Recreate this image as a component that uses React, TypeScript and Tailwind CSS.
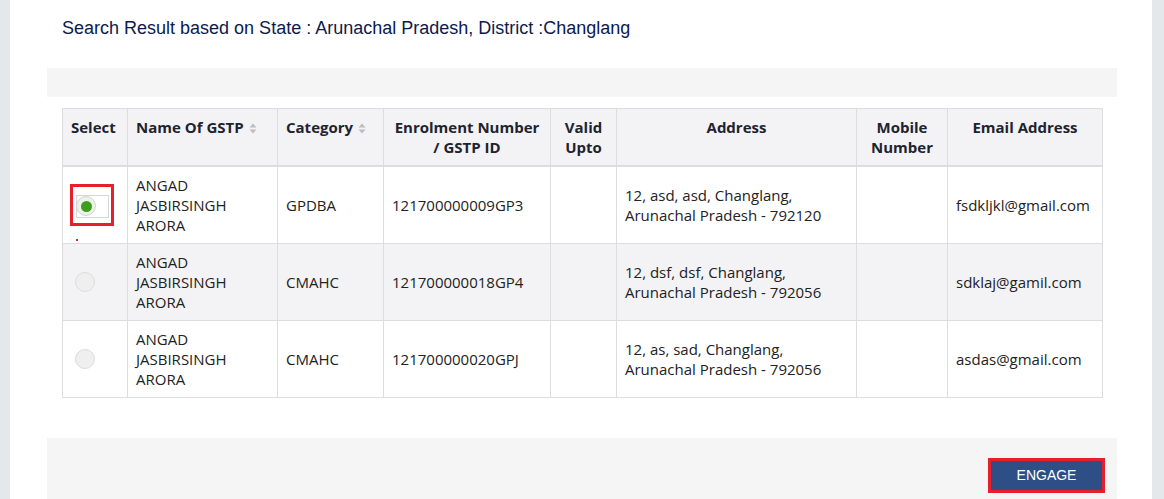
import type { ReactNode } from 'react'

type Row = {
  name: string[]
  category: string
  enrolment: string
  address: string[]
  email: string
  selected?: boolean
}

const ROWS: Row[] = [
  {
    name: ['ANGAD', 'JASBIRSINGH', 'ARORA'],
    category: 'GPDBA',
    enrolment: '121700000009GP3',
    address: ['12, asd, asd, Changlang,', 'Arunachal Pradesh - 792120'],
    email: 'fsdkljkl@gmail.com',
    selected: true,
  },
  {
    name: ['ANGAD', 'JASBIRSINGH', 'ARORA'],
    category: 'CMAHC',
    enrolment: '121700000018GP4',
    address: ['12, dsf, dsf, Changlang,', 'Arunachal Pradesh - 792056'],
    email: 'sdklaj@gamil.com',
  },
  {
    name: ['ANGAD', 'JASBIRSINGH', 'ARORA'],
    category: 'CMAHC',
    enrolment: '121700000020GPJ',
    address: ['12, as, sad, Changlang,', 'Arunachal Pradesh - 792056'],
    email: 'asdas@gmail.com',
  },
]

function SortIcon() {
  return (
    <svg width="8" height="11" viewBox="0 0 8 11" className="ml-[5px] inline-block align-[-1px]">
      <path d="M4 0.5 L7.5 4.5 H0.5 Z" fill="#bdbdbd" />
      <path d="M4 10.5 L7.5 6.5 H0.5 Z" fill="#bdbdbd" />
    </svg>
  )
}

function Th({ children, className = '' }: { children: ReactNode; className?: string }) {
  return (
    <th className={`border border-[#dddddd] border-b-2 px-2 py-2 align-top font-bold text-[#1f2330] ${className}`}>
      {children}
    </th>
  )
}

function Td({ children, className = '' }: { children?: ReactNode; className?: string }) {
  return <td className={`border border-[#dddddd] px-2 py-2 align-middle ${className}`}>{children}</td>
}

function Radio({ checked }: { checked?: boolean }) {
  if (checked) {
    return (
      <div className="relative ml-[-1px] h-[42px] w-[44px] border-[3px] border-[#e5202b]">
        <div className="absolute left-[3px] top-[8px] h-[23px] w-[33px] border border-[#d6d6d6]" />
        <div className="absolute left-[3px] top-[9px] flex h-[20px] w-[20px] items-center justify-center rounded-full border border-[#cfd8cb] bg-[#eef2ec]">
          <div className="h-[11px] w-[11px] rounded-full bg-[#3f9f1b]" />
        </div>
        <div className="absolute left-[3px] top-[52px] h-[2px] w-[2px] bg-[#e5202b]" />
      </div>
    )
  }
  return <div className="ml-[4px] h-[20px] w-[20px] rounded-full border border-[#dcdcdc] bg-[#efefef]" />
}

export default function App() {
  return (
    <div className="flex h-[499px] w-full overflow-hidden bg-[#e5e8eb] pl-[10px] pr-[12px]">
      <div className="flex-1 bg-white">
        {/* Heading */}
        <h2 className="pl-[52px] pt-[17px] font-['Liberation_Sans',Arial,sans-serif] text-[18px] leading-[22px] text-[#0d1a4d]">
          Search Result based on State : Arunachal Pradesh, District :Changlang
        </h2>

        <div className="ml-[37px] mt-[29px] w-[1070px]">
          <div className="h-[29px] bg-[#f5f5f5]" />

          {/* Results table */}
          <div className="px-[15px] pt-[11px]">
            <table className="w-[1040px] table-fixed border-collapse font-['Open_Sans',sans-serif] text-[15px] leading-[20px] text-[#222222]">
              <colgroup>
                <col className="w-[65px]" />
                <col className="w-[150px]" />
                <col className="w-[106px]" />
                <col className="w-[167px]" />
                <col className="w-[66px]" />
                <col className="w-[240px]" />
                <col className="w-[91px]" />
                <col className="w-[155px]" />
              </colgroup>
              <thead className="bg-[#f3f3f5]">
                <tr>
                  <Th className="text-left">Select</Th>
                  <Th className="text-left">
                    Name Of GSTP
                    <SortIcon />
                  </Th>
                  <Th className="text-left">
                    Category
                    <SortIcon />
                  </Th>
                  <Th className="text-center">Enrolment Number / GSTP ID</Th>
                  <Th className="text-center">Valid Upto</Th>
                  <Th className="text-center">Address</Th>
                  <Th className="text-center">Mobile Number</Th>
                  <Th className="text-center">Email Address</Th>
                </tr>
              </thead>
              <tbody>
                {ROWS.map((row, i) => (
                  <tr key={row.enrolment} className={i === 1 ? 'bg-[#f3f3f5]' : 'bg-white'}>
                    <Td>
                      <Radio checked={row.selected} />
                    </Td>
                    <Td>
                      {row.name.map((n) => (
                        <div key={n}>{n}</div>
                      ))}
                    </Td>
                    <Td>{row.category}</Td>
                    <Td>{row.enrolment}</Td>
                    <Td />
                    <Td>
                      {row.address.map((a) => (
                        <div key={a}>{a}</div>
                      ))}
                    </Td>
                    <Td />
                    <Td>{row.email}</Td>
                  </tr>
                ))}
              </tbody>
            </table>
          </div>

          {/* Action bar */}
          <div className="mt-[40px] flex h-[80px] justify-end bg-[#f5f5f5] pr-[12px] pt-[20px]">
            <button className="h-[35px] w-[117px] border-[3px] border-[#e5202b] bg-[#2d4f86] font-['Liberation_Sans',Arial,sans-serif] text-[14px] text-white">
              ENGAGE
            </button>
          </div>
        </div>
      </div>
    </div>
  )
}
